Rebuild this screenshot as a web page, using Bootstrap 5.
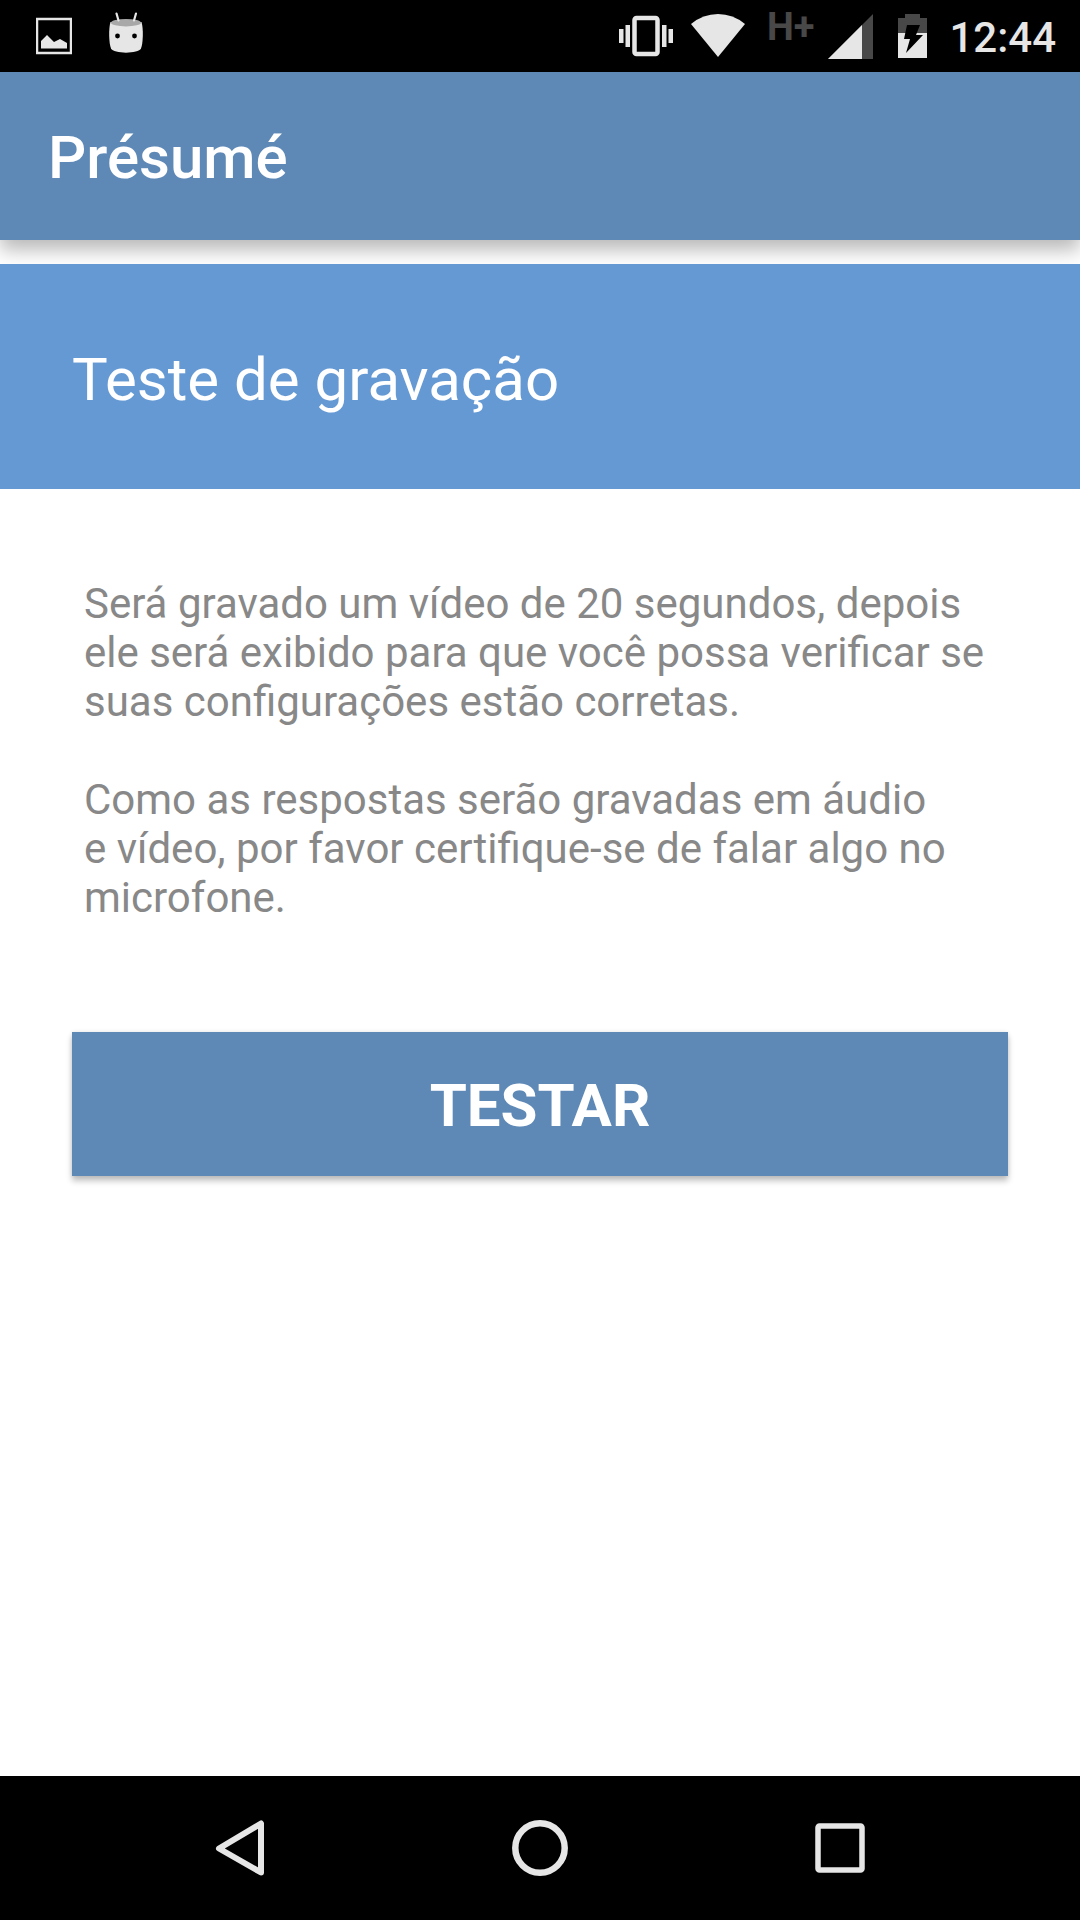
<!DOCTYPE html>
<html lang="pt-BR">
<head>
<meta charset="utf-8">
<meta name="viewport" content="width=device-width, initial-scale=1">
<title>Présumé</title>
<link href="https://cdn.jsdelivr.net/npm/bootstrap@5.3.0/dist/css/bootstrap.min.css" rel="stylesheet">
<style>
  body { font-family: Roboto, "Liberation Sans", sans-serif; background: #fff; }
  .status-bar { height: 72px; padding: 0 24px 0 36px; color: #e6e6e6; font-size: 42px; line-height: 76px; font-weight: 500; }
  .status-bar svg { height: 72px; flex: none; }
  .status-left { gap: 36px; }
  .status-right { gap: 18px; }
  .net-type { margin-right: -4px; font-size: 38px; line-height: 54px; font-weight: 700; color: #484848; }
  .app-bar { padding: 51px 48px 47px; background: #5e89b6; box-shadow: 0 10px 18px rgba(0, 0, 0, .28); }
  .app-title, .banner-title { font-size: 60px; line-height: 70px; }
  .app-title { font-weight: 500; }
  .banner-strip { margin-top: 24px; padding: 81px 72px 74px; background: #6499d4; }
  .banner-title { font-weight: 400; }
  .page-body { padding: 90px 72px; }
  .intro { padding: 0 12px; margin-bottom: 110px; font-size: 42px; line-height: 49px; color: #888; }
  .intro p { margin-bottom: 49px; }
  .intro p:last-child { margin-bottom: 0; }
  .btn-test { --bs-btn-color: #fff; --bs-btn-bg: #5e89b6; --bs-btn-border-width: 0; --bs-btn-hover-color: #fff; --bs-btn-hover-bg: #527ca6; --bs-btn-active-color: #fff; --bs-btn-active-bg: #486f96;
    padding: 39px 24px 35px; font-size: 60px; line-height: 70px; font-weight: 700; box-shadow: 0 5px 6px rgba(0, 0, 0, .24), 0 0 4px rgba(0, 0, 0, .1); }
  .nav-keys { height: 144px; padding: 0 90px; }
  .nav-keys svg { width: 72px; height: 72px; }
</style>
<script src="https://cdn.jsdelivr.net/npm/bootstrap@5.3.0/dist/js/bootstrap.bundle.min.js" defer></script>
</head>
<body class="d-flex flex-column min-vh-100">
  <div class="status-bar bg-black d-flex justify-content-between">
    <div class="status-left d-flex">
      <svg width="36" viewBox="0 0 36 72" aria-hidden="true">
        <rect x="1" y="19" width="34" height="34" fill="none" stroke="#e6e6e6" stroke-width="2.500"/>
        <path d="M5 48.500V41l6-6 7 7 6-3 7 4v5.500z" fill="#e6e6e6"/>
      </svg>
      <svg width="36" viewBox="0 0 36 72" aria-hidden="true">
        <path d="M2.500 22C.5 28 .8 43 3 48.500c2.500 5.500 27.500 5.500 30 0C35.200 43 35.500 28 33.500 22z" fill="#e6e6e6"/>
        <ellipse cx="18" cy="22.700" rx="15" ry="3.700" fill="#a8a8a8"/>
        <path d="M8.500 13.500l2 7M28 13.500l-2 7" stroke="#e6e6e6" stroke-width="2.200" stroke-linecap="round"/>
        <circle cx="9.500" cy="36" r="2.400"/><circle cx="26.500" cy="36" r="2.400"/>
      </svg>
    </div>
    <div class="status-right d-flex">
      <svg width="54" viewBox="0 0 54 72" aria-hidden="true">
        <rect x="15.500" y="18" width="23" height="36" rx="2" fill="none" stroke="#e6e6e6" stroke-width="4.500"/>
        <path d="M0 29h4.500v14H0zM6.500 25H11v22H6.500zM43 25h4.500v22H43zM49.500 29H54v14h-4.500z" fill="#e6e6e6"/>
      </svg>
      <svg width="54" viewBox="0 0 54 72" aria-hidden="true">
        <path d="M0 24Q12 14 27 14T54 24L27 57z" fill="#e6e6e6"/>
      </svg>
      <span class="net-type ps-1">H+</span>
      <svg width="48" viewBox="0 0 48 72" aria-hidden="true">
        <path d="M0 59L45 14V59z" fill="#484848"/><path d="M0 59L34 25V59z" fill="#e6e6e6"/>
      </svg>
      <svg class="ms-1" width="29" viewBox="0 0 29 72" aria-hidden="true">
        <path d="M0 18h7v-4h15v4h7v16H0z" fill="#484848"/><path d="M0 33h29v25H0z" fill="#e6e6e6"/>
        <path d="M9 25h13l-4 10h7L8 53l4-14H6z" fill="#000"/>
      </svg>
      <span class="ps-1">12:44</span>
    </div>
  </div>

  <header class="app-bar text-white">
    <h1 class="app-title m-0">Présumé</h1>
  </header>

  <main class="flex-grow-1">
    <div class="banner-strip text-white">
      <h2 class="banner-title m-0">Teste de gravação</h2>
    </div>
    <div class="page-body">
      <div class="intro">
        <p>Será gravado um vídeo de 20 segundos, depois ele será exibido para que você possa verificar se suas configurações estão corretas.</p>
        <p>Como as respostas serão gravadas em áudio e&nbsp;vídeo, por favor certifique-se de falar algo no microfone.</p>
      </div>
      <button type="button" class="btn btn-test w-100 rounded-0">TESTAR</button>
    </div>
  </main>

  <nav class="nav-keys bg-black d-flex align-items-center" aria-label="Navegação">
    <button type="button" class="btn border-0 p-0 flex-fill" aria-label="Voltar">
      <svg viewBox="0 0 72 72" fill="none" stroke="#e6e6e6" stroke-width="6"><path d="M57 11.500v49L15 36.500z" stroke-linejoin="round"/></svg>
    </button>
    <button type="button" class="btn border-0 p-0 flex-fill" aria-label="Início">
      <svg viewBox="0 0 72 72" fill="none" stroke="#e6e6e6" stroke-width="6.500"><circle cx="36" cy="36" r="24.700"/></svg>
    </button>
    <button type="button" class="btn border-0 p-0 flex-fill" aria-label="Recentes">
      <svg viewBox="0 0 72 72" fill="none" stroke="#e6e6e6" stroke-width="5.500"><rect x="14" y="14" width="44" height="44" rx="1.500"/></svg>
    </button>
  </nav>
</body>
</html>
